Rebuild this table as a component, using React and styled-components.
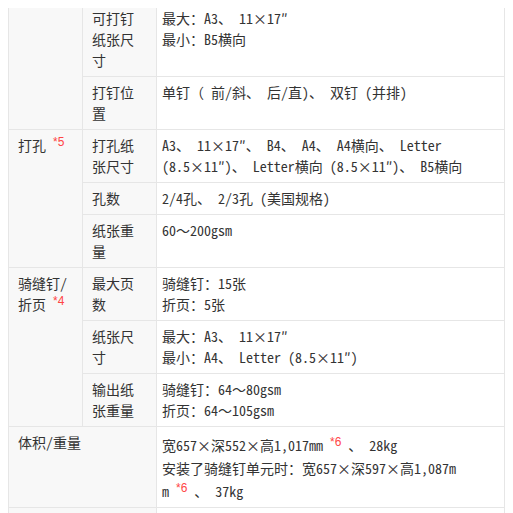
import React from 'react';
import styled, { createGlobalStyle } from 'styled-components';

const GlobalStyle = createGlobalStyle`
    body {
        margin: 8px;
        background: #fff;
        color: #333;
        font-family: "Noto Sans Mono CJK SC", "Noto Sans CJK SC", sans-serif;
        font-size: 14px;
        overflow: hidden;
    }
`;

const SpecTable = styled.table`
    width: 496px;
    margin-top: -38px;
    border-collapse: collapse;
    table-layout: fixed;
`;

const Cell = styled.td`
    border: 1px solid #e6e6e6;
    vertical-align: top;
    height: ${props => props.$h || 'auto'};
    line-height: ${props => props.$lh || 21}px;
    padding: ${props => props.$pt || 5}px ${props => (props.$label ? 9 : 5)}px ${props => props.$pb || 5}px;
    background: ${props => (props.$label ? '#f8f8f8' : '#fff')};
    color: #333;
`;

const Note = styled.sup`
    font-family: "Liberation Sans", Arial, sans-serif;
    font-size: 12px;
    line-height: 0;
    color: #ff4545;
    vertical-align: 5px;
`;

const Mark = ({ n }) => <Note>*{n}</Note>;

export default function App() {
    return (
        <>
            <GlobalStyle />
            <SpecTable>
                <colgroup>
                    <col style={{ width: 74 }} />
                    <col style={{ width: 74 }} />
                    <col style={{ width: 348 }} />
                </colgroup>
                <tbody>
                    {/* row above the visible part, scrolled out of view */}
                    <tr>
                        <Cell $label rowSpan={3} />
                        <Cell $label $h="21px" />
                        <Cell />
                    </tr>
                    <tr>
                        <Cell $label>可打钉纸张尺寸</Cell>
                        <Cell>最大：A3、 11×17″<br />最小：B5横向</Cell>
                    </tr>
                    <tr>
                        <Cell $label>打钉位置</Cell>
                        <Cell>单钉（ 前/斜、 后/直)、 双钉 (并排)</Cell>
                    </tr>
                    <tr>
                        <Cell $label rowSpan={3}>打孔 <Mark n={5} /></Cell>
                        <Cell $label>打孔纸张尺寸</Cell>
                        <Cell>
                            A3、 11×17″、 B4、 A4、 A4横向、 Letter<br />
                            (8.5×11″)、 Letter横向 (8.5×11″)、 B5横向
                        </Cell>
                    </tr>
                    <tr>
                        <Cell $label>孔数</Cell>
                        <Cell>2/4孔、 2/3孔 (美国规格)</Cell>
                    </tr>
                    <tr>
                        <Cell $label>纸张重量</Cell>
                        <Cell>60〜200gsm</Cell>
                    </tr>
                    <tr>
                        <Cell $label rowSpan={3}>骑缝钉/<br />折页 <Mark n={4} /></Cell>
                        <Cell $label>最大页数</Cell>
                        <Cell>骑缝钉：15张<br />折页：5张</Cell>
                    </tr>
                    <tr>
                        <Cell $label>纸张尺寸</Cell>
                        <Cell>最大：A3、 11×17″<br />最小：A4、 Letter (8.5×11″)</Cell>
                    </tr>
                    <tr>
                        <Cell $label>输出纸张重量</Cell>
                        <Cell>骑缝钉：64〜80gsm<br />折页：64〜105gsm</Cell>
                    </tr>
                    <tr>
                        <Cell $label colSpan={2}>体积/重量</Cell>
                        <Cell $lh={23} $pt={7} $pb={4}>
                            宽657×深552×高1,017mm <Mark n={6} /> 、 28kg<br />
                            安装了骑缝钉单元时：宽657×深597×高1,087m<br />
                            m <Mark n={6} /> 、 37kg
                        </Cell>
                    </tr>
                    {/* next row, below the visible part */}
                    <tr>
                        <Cell $label colSpan={2} $h="21px" />
                        <Cell />
                    </tr>
                </tbody>
            </SpecTable>
        </>
    );
}
